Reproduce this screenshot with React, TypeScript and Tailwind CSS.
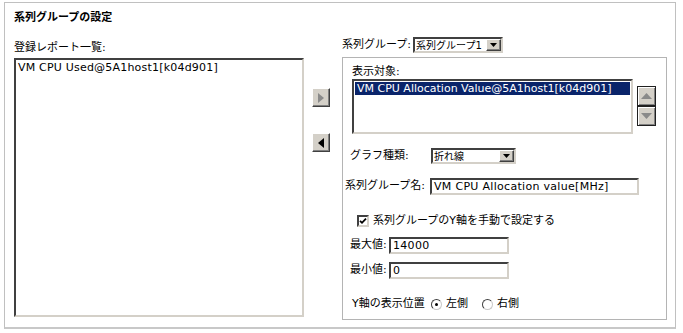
const inset =
  "border-2 border-t-[#404040] border-l-[#404040] border-r-[#d4d0c8] border-b-[#d4d0c8] bg-white";
const raised =
  "border border-t-white border-l-white border-r-[#404040] border-b-[#404040] bg-[#d4d0c8] shadow-[inset_-1px_-1px_0_#808080]";

const DropButton = () => (
  <div className={`w-[15px] h-full flex items-center justify-center ${raised}`}>
    <svg width="7" height="4" viewBox="0 0 7 4">
      <path d="M0 0h7L3.5 4z" fill="#000" />
    </svg>
  </div>
);

const Select = ({ value, width }: { value: string; width: string }) => (
  <div className={`flex h-[16px] ${width} ${inset}`}>
    <div className="flex-1 text-[10px] leading-[12px] pl-[1px] pt-[1px] overflow-hidden whitespace-nowrap">{value}</div>
    <DropButton />
  </div>
);

const TextBox = ({ value, width }: { value: string; width: string }) => (
  <div className={`h-[17px] ${width} ${inset} pl-[2px] leading-[13px] tracking-[0.3px] whitespace-nowrap`}>
    {value}
  </div>
);

const ArrowButton = ({ dir, enabled }: { dir: "left" | "right"; enabled: boolean }) => (
  <div className={`w-[18px] h-[19px] flex items-center justify-center ${raised}`}>
    <svg width="6" height="10" viewBox="0 0 6 10">
      {dir === "right" ? (
        <path d="M0 0v10l6-5z" fill={enabled ? "#000" : "#8a8a8a"} />
      ) : (
        <path d="M6 0v10L0 5z" fill={enabled ? "#000" : "#8a8a8a"} />
      )}
    </svg>
  </div>
);

const UpDown = ({ dir }: { dir: "up" | "down" }) => (
  <div className="w-[19px] h-[20px] border border-[#202020] bg-[#d4d0c8] flex items-center justify-center shadow-[inset_1px_1px_0_#fff,inset_-1px_-1px_0_#808080]">
    <svg width="11" height="6" viewBox="0 0 11 6">
      {dir === "up" ? (
        <path d="M0 6h11L5.5 0z" fill="#8a8a8a" />
      ) : (
        <path d="M0 0h11L5.5 6z" fill="#8a8a8a" />
      )}
    </svg>
  </div>
);

const Radio = ({ checked }: { checked: boolean }) => (
  <div className="w-[11px] h-[11px] rounded-full border border-t-[#404040] border-l-[#404040] border-r-[#c8c8c8] border-b-[#c8c8c8] bg-white flex items-center justify-center">
    {checked && <div className="w-[3px] h-[3px] rounded-full bg-black" />}
  </div>
);

export default function App() {
  return (
    <div className="w-[683px] h-[333px] bg-white pl-[4px] pt-[2px] text-[11px] text-black font-['DejaVu_Sans','Noto_Sans_CJK_JP',sans-serif]">
      <div className="w-[672px] h-[327px] border border-[#c0c0c0] border-b-2 border-b-[#c8c8c8] pl-[9px] pt-[8px]">
        <div className="font-bold h-[14px] leading-[14px]">系列グループの設定</div>

        <div className="flex mt-[12px]">
          {/* left list */}
          <div className="flex flex-col mt-[4px]">
            <div className="h-[14px] leading-[14px]">登録レポート一覧:</div>
            <div className={`mt-[3px] w-[290px] h-[259px] ${inset} pl-[2px] pt-[1px] leading-[14px] tracking-[0.2px] whitespace-nowrap`}>
              VM CPU Used@5A1host1[k04d901]
            </div>
          </div>

          {/* move buttons */}
          <div className="flex flex-col ml-[8px] mt-[51px] gap-[26px]">
            <ArrowButton dir="right" enabled={false} />
            <ArrowButton dir="left" enabled={true} />
          </div>

          {/* right side */}
          <div className="flex flex-col ml-[12px] w-[325px]">
            <div className="flex items-center h-[16px]">
              <div className="w-[71px] whitespace-nowrap">系列グループ:</div>
              <Select value="系列グループ1" width="w-[90px]" />
            </div>

            <div className="mt-[4px] w-[325px] h-[263px] border border-[#b4b4b4] pl-[2px] pt-[7px]">
              <div className="pl-[7px] h-[14px] leading-[14px]">表示対象:</div>
              <div className="flex pl-[7px]">
                <div className={`w-[281px] h-[55px] ${inset} p-[1px]`}>
                  <div className="h-[13px] bg-[#0a246a] text-white leading-[13px] pl-[2px] whitespace-nowrap">
                    VM CPU Allocation Value@5A1host1[k04d901]
                  </div>
                </div>
                <div className="flex flex-col ml-[4px] mt-[7px]">
                  <UpDown dir="up" />
                  <UpDown dir="down" />
                </div>
              </div>

              <div className="flex items-center mt-[14px] pl-[5px]">
                <div className="w-[81px]">グラフ種類:</div>
                <Select value="折れ線" width="w-[85px]" />
              </div>

              <div className="flex items-center mt-[13px]">
                <div className="w-[85px] whitespace-nowrap">系列グループ名:</div>
                <TextBox value="VM CPU Allocation value[MHz]" width="w-[209px]" />
              </div>

              <div className="flex items-center mt-[20px] pl-[12px] h-[13px]">
                <div className={`w-[12px] h-[12px] ${inset} flex items-center justify-center`}>
                  <svg width="8" height="8" viewBox="0 0 8 8">
                    <path d="M1 3.8l2 2L7 1.6" stroke="#000" strokeWidth="1.8" fill="none" />
                  </svg>
                </div>
                <div className="ml-[4px]">系列グループのY軸を手動で設定する</div>
              </div>

              <div className="flex items-center mt-[9px] pl-[5px]">
                <div className="w-[39px]">最大値:</div>
                <TextBox value="14000" width="w-[120px]" />
              </div>

              <div className="flex items-center mt-[8px] pl-[5px]">
                <div className="w-[39px]">最小値:</div>
                <TextBox value="0" width="w-[120px]" />
              </div>

              <div className="flex items-center mt-[19px] pl-[7px] h-[14px]">
                <div className="w-[79px] whitespace-nowrap">Y軸の表示位置</div>
                <Radio checked={true} />
                <div className="ml-[4px]">左側</div>
                <div className="ml-[14px]">
                  <Radio checked={false} />
                </div>
                <div className="ml-[4px]">右側</div>
              </div>
            </div>
          </div>
        </div>
      </div>
    </div>
  );
}
